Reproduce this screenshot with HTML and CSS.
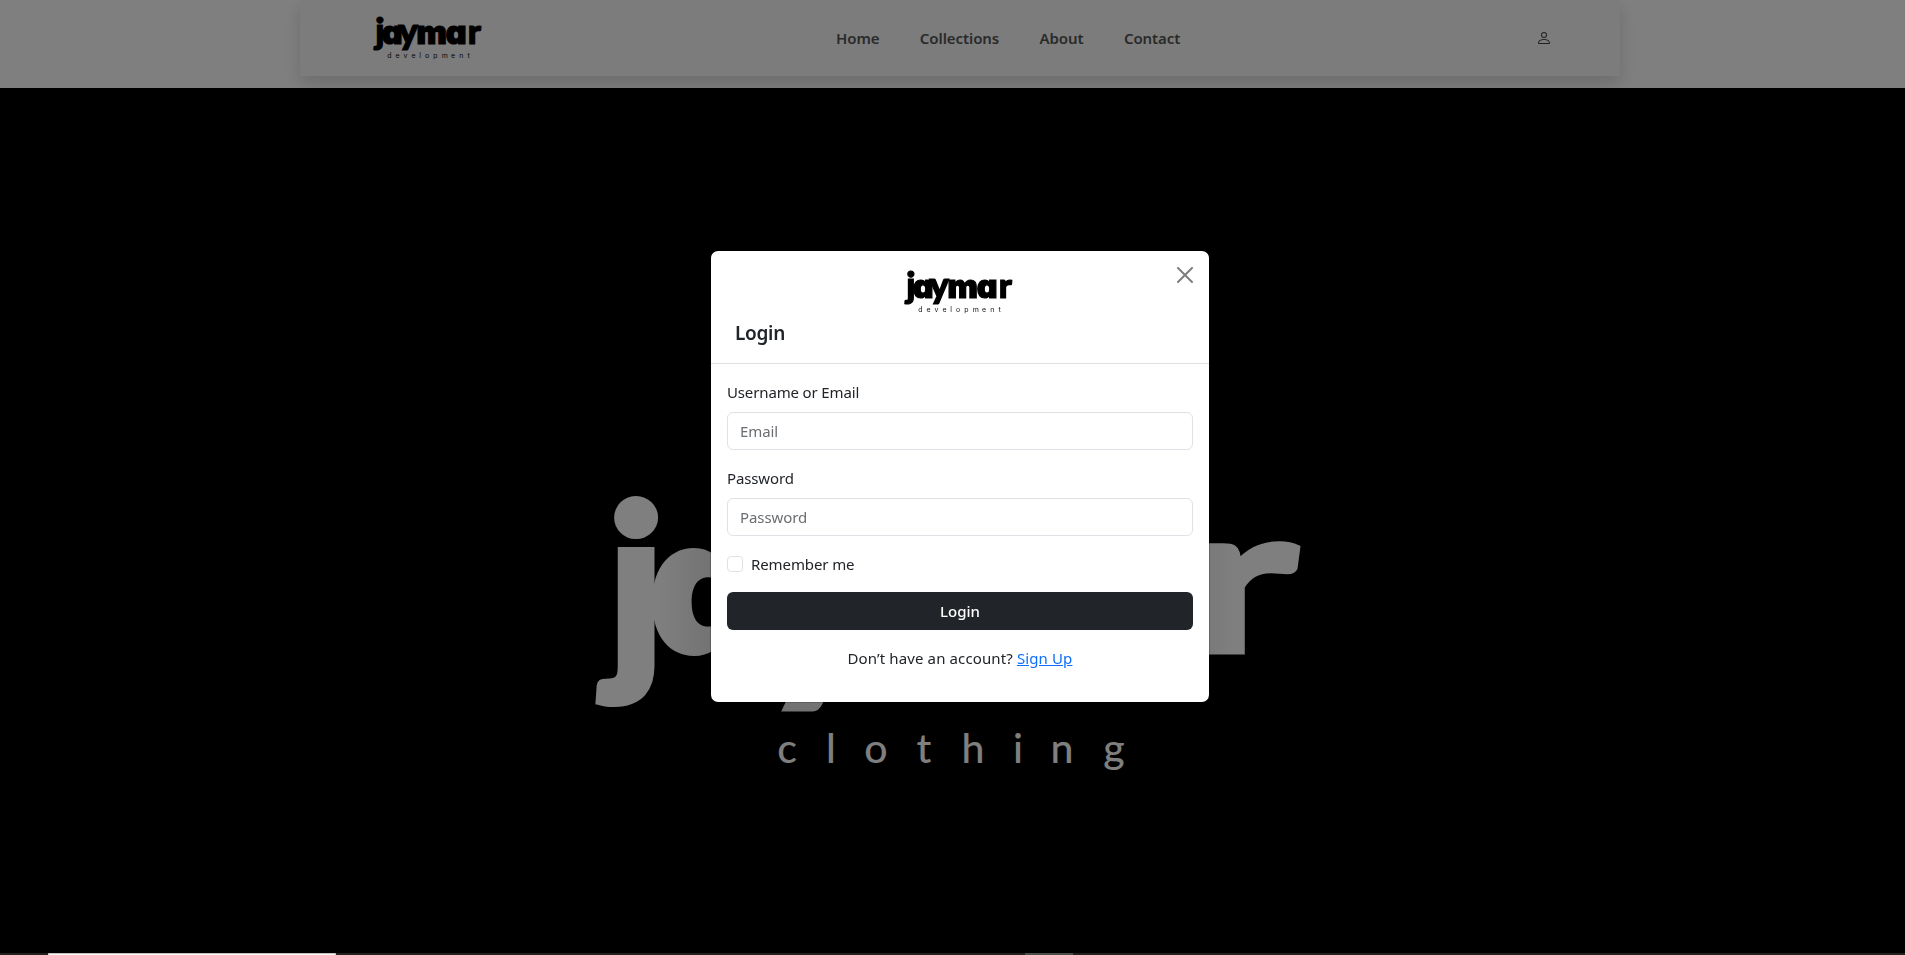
FILE: index.html
```html
<!DOCTYPE html>
<html lang="en">
<head>
<meta charset="utf-8">
<title>Jaymar Clothing</title>
<link rel="stylesheet" href="styles.css">
</head>
<body>
<div class="page">
  <header class="header">
    <nav class="navbar">
      <svg class="logo" viewBox="0 0 715 290" role="img" aria-label="jaymar development">
        <text class="logo-word" x="44 124 230 385 547 667" y="184"><tspan class="logo-j">j</tspan>a<tspan class="logo-y">y</tspan>ma<tspan class="logo-r">r</tspan></text>
        <text class="logo-sub" x="107 160 213 265 309 355 410 471 526 581 629" y="276">development</text>
      </svg>
      <ul class="menu">
        <li>Home</li><li>Collections</li><li>About</li><li>Contact</li>
      </ul>
      <svg class="user" viewBox="0 0 16 16"><path d="M8 8a3 3 0 1 0 0-6 3 3 0 0 0 0 6m2-3a2 2 0 1 1-4 0 2 2 0 0 1 4 0m4 8c0 1-1 1-1 1H3s-1 0-1-1 1-4 6-4 6 3 6 4m-1-.004c-.001-.246-.154-.986-.832-1.664C11.516 10.68 10.289 10 8 10s-3.516.68-4.168 1.332c-.678.678-.83 1.418-.832 1.664z"/></svg>
    </nav>
  </header>
  <main class="hero">
    <svg class="hero-logo" viewBox="0 0 715 300" role="img" aria-label="jaymar clothing">
      <defs>
        <linearGradient id="shade" gradientUnits="userSpaceOnUse" x1="0" y1="0" x2="715" y2="0">
          <stop offset="0" stop-color="#fff"/><stop offset=".1" stop-color="#fff"/>
          <stop offset=".18" stop-color="#e4e4e4"/><stop offset=".86" stop-color="#e8e8e8"/>
          <stop offset=".92" stop-color="#fff"/><stop offset="1" stop-color="#fff"/>
        </linearGradient>
        <linearGradient id="shade-end" x1="0" y1="0" x2="1" y2="0">
          <stop offset="0" stop-color="#e4e4e4"/><stop offset=".45" stop-color="#fff"/>
        </linearGradient>
      </defs>
      <text class="hero-word" x="49 122 238 377 530" y="174"><tspan class="hero-j" dy="9">j</tspan><tspan dy="-9">a</tspan><tspan class="hero-y" dy="10">y</tspan><tspan dy="-10">m</tspan>a</text>
      <text class="hero-word hero-r" transform="translate(652 171) scale(1.5 1)">r</text>
      <text class="hero-sub" x="200 244 289 337 386 431 475 527" y="282">clothing</text>
    </svg>
  </main>
  <div class="strip"><span class="strip-mark"></span></div>
</div>
<div class="backdrop">
  <section class="modal">
    <div class="modal-head">
      <svg class="logo" viewBox="0 0 715 290" role="img" aria-label="jaymar development">
        <text class="logo-word" x="44 124 230 385 547 667" y="184"><tspan class="logo-j">j</tspan>a<tspan class="logo-y">y</tspan>ma<tspan class="logo-r">r</tspan></text>
        <text class="logo-sub" x="107 160 213 265 309 355 410 471 526 581 629" y="276">development</text>
      </svg>
      <h1 class="title">Login</h1>
      <svg class="close" viewBox="0 0 16 16"><path d="M.293.293a1 1 0 0 1 1.414 0L8 6.586 14.293.293a1 1 0 1 1 1.414 1.414L9.414 8l6.293 6.293a1 1 0 0 1-1.414 1.414L8 9.414l-6.293 6.293a1 1 0 0 1-1.414-1.414L6.586 8 .293 1.707a1 1 0 0 1 0-1.414"/></svg>
    </div>
    <form class="modal-body">
      <label class="label" for="email">Username or Email</label>
      <input class="field" id="email" type="text" placeholder="Email">
      <label class="label" for="password">Password</label>
      <input class="field" id="password" type="password" placeholder="Password">
      <label class="remember"><input class="check" type="checkbox"><span>Remember me</span></label>
      <button class="submit" type="button">Login</button>
      <p class="signup">Don’t have an account? <a class="link" href="#">Sign Up</a></p>
    </form>
  </section>
</div>
<div class="status"></div>
</body>
</html>
```
FILE: styles.css
```css
* { box-sizing: border-box; }
body {
  margin: 0;
  overflow: hidden;
  background: #fff;
  color: #212529;
  font: 400 15px/24px "Noto Sans", "Open Sans", sans-serif;
}
.page { height: 955px; display: flex; flex-direction: column; }
.header { height: 88px; padding: 0 285px 0 300px; overflow: hidden; }
.navbar {
  height: 76px;
  display: grid;
  grid-template-columns: 536px 1fr 16px;
  align-items: center;
  padding: 0 68px 0 0;
  background: #f8f8f8;
  box-shadow: 0 8px 16px rgba(0, 0, 0, .15);
}
.logo { display: block; width: 109px; height: 44px; overflow: visible; }
.navbar .logo { margin-left: 73px; }
.logo-word, .hero-word {
  font-family: Inter, sans-serif;
  font-weight: 900;
  font-feature-settings: "cv11";
  text-anchor: middle;
}
.logo-word { font-size: 212px; fill: #000; stroke: #000; stroke-width: 8px; }
.logo-j { font-family: Lato, sans-serif; font-size: 234px; }
.logo-y { font-family: Lato, sans-serif; font-size: 240px; }
.logo-r { font-family: Lato, sans-serif; font-size: 230px; }
.logo-sub { font: 400 46px Inter, sans-serif; text-anchor: middle; fill: #111; }
.hero-word { font-size: 194px; fill: url(#shade); }
.hero-j { font-family: Lato, sans-serif; font-size: 222px; stroke: #fff; stroke-width: 6px; }
.hero-y { font-family: Lato, sans-serif; font-size: 280px; }
.hero-r { font-family: Lato, sans-serif; font-size: 206px; fill: url(#shade-end); stroke: url(#shade-end); stroke-width: 5px; }
.hero-sub { font: 500 41px Lato, sans-serif; text-anchor: middle; fill: #fff; }
.menu {
  display: flex;
  gap: 40.4px;
  margin: 0;
  padding: 0;
  list-style: none;
  font-weight: 600;
  letter-spacing: -.08px;
  color: #555;
}
.user { width: 16px; height: 16px; fill: #444; }
.hero { flex: 1; background: #000; padding: 393px 0 0 587px; }
.hero-logo { display: block; width: 715px; height: 300px; overflow: visible; }
.strip { height: 2px; background: #463c3e; padding-left: 1025px; }
.strip-mark { display: block; width: 48px; height: 2px; background: #999; }
.backdrop {
  position: fixed;
  inset: 0;
  display: flex;
  justify-content: center;
  align-items: flex-start;
  padding: 250px 0 0 15px;
  background: rgba(0, 0, 0, .5);
}
.modal {
  width: 500px;
  height: 453px;
  border: 1px solid rgba(0, 0, 0, .175);
  border-radius: 8px;
  background: #fff;
  background-clip: padding-box;
}
.modal-head { position: relative; height: 113px; padding: 19px 0 0 24px; border-bottom: 1px solid #dee2e6; }
.modal-head .logo { margin-left: 169px; }
.title { margin: 4px 0 0; font-size: 19px; line-height: 30px; font-weight: 600; letter-spacing: -.3px; }
.close { position: absolute; top: 16px; right: 16px; width: 16px; height: 16px; opacity: .5; }
.modal-body { display: flex; flex-direction: column; padding: 16px; }
.label { margin-bottom: 8px; letter-spacing: -.14px; }
.field {
  height: 38px;
  margin: 0 0 16px;
  padding: 6px 12px;
  border: 1px solid #dee2e6;
  border-radius: 6px;
  background: #fff;
  color: #212529;
  font: inherit;
  letter-spacing: -.1px;
}
.field::placeholder { color: #6a6e72; opacity: 1; }
.remember { display: flex; align-items: center; gap: 8px; margin-bottom: 16px; letter-spacing: -.1px; }
.check { appearance: none; width: 16px; height: 16px; margin: 0; border: 1px solid #dee2e6; border-radius: 4px; }
.submit {
  height: 38px;
  border: 0;
  border-radius: 6px;
  background: #212529;
  color: #fff;
  font: inherit;
  font-weight: 500;
}
.signup { margin: 16px 0 0; text-align: center; letter-spacing: .12px; }
.link { color: #0d6efd; }
.status {
  position: fixed;
  left: 48px;
  bottom: 0;
  width: 288px;
  height: 2px;
  border: 1px solid #c4c0bc;
  border-bottom: 0;
  background: #faf8f6;
}
```
